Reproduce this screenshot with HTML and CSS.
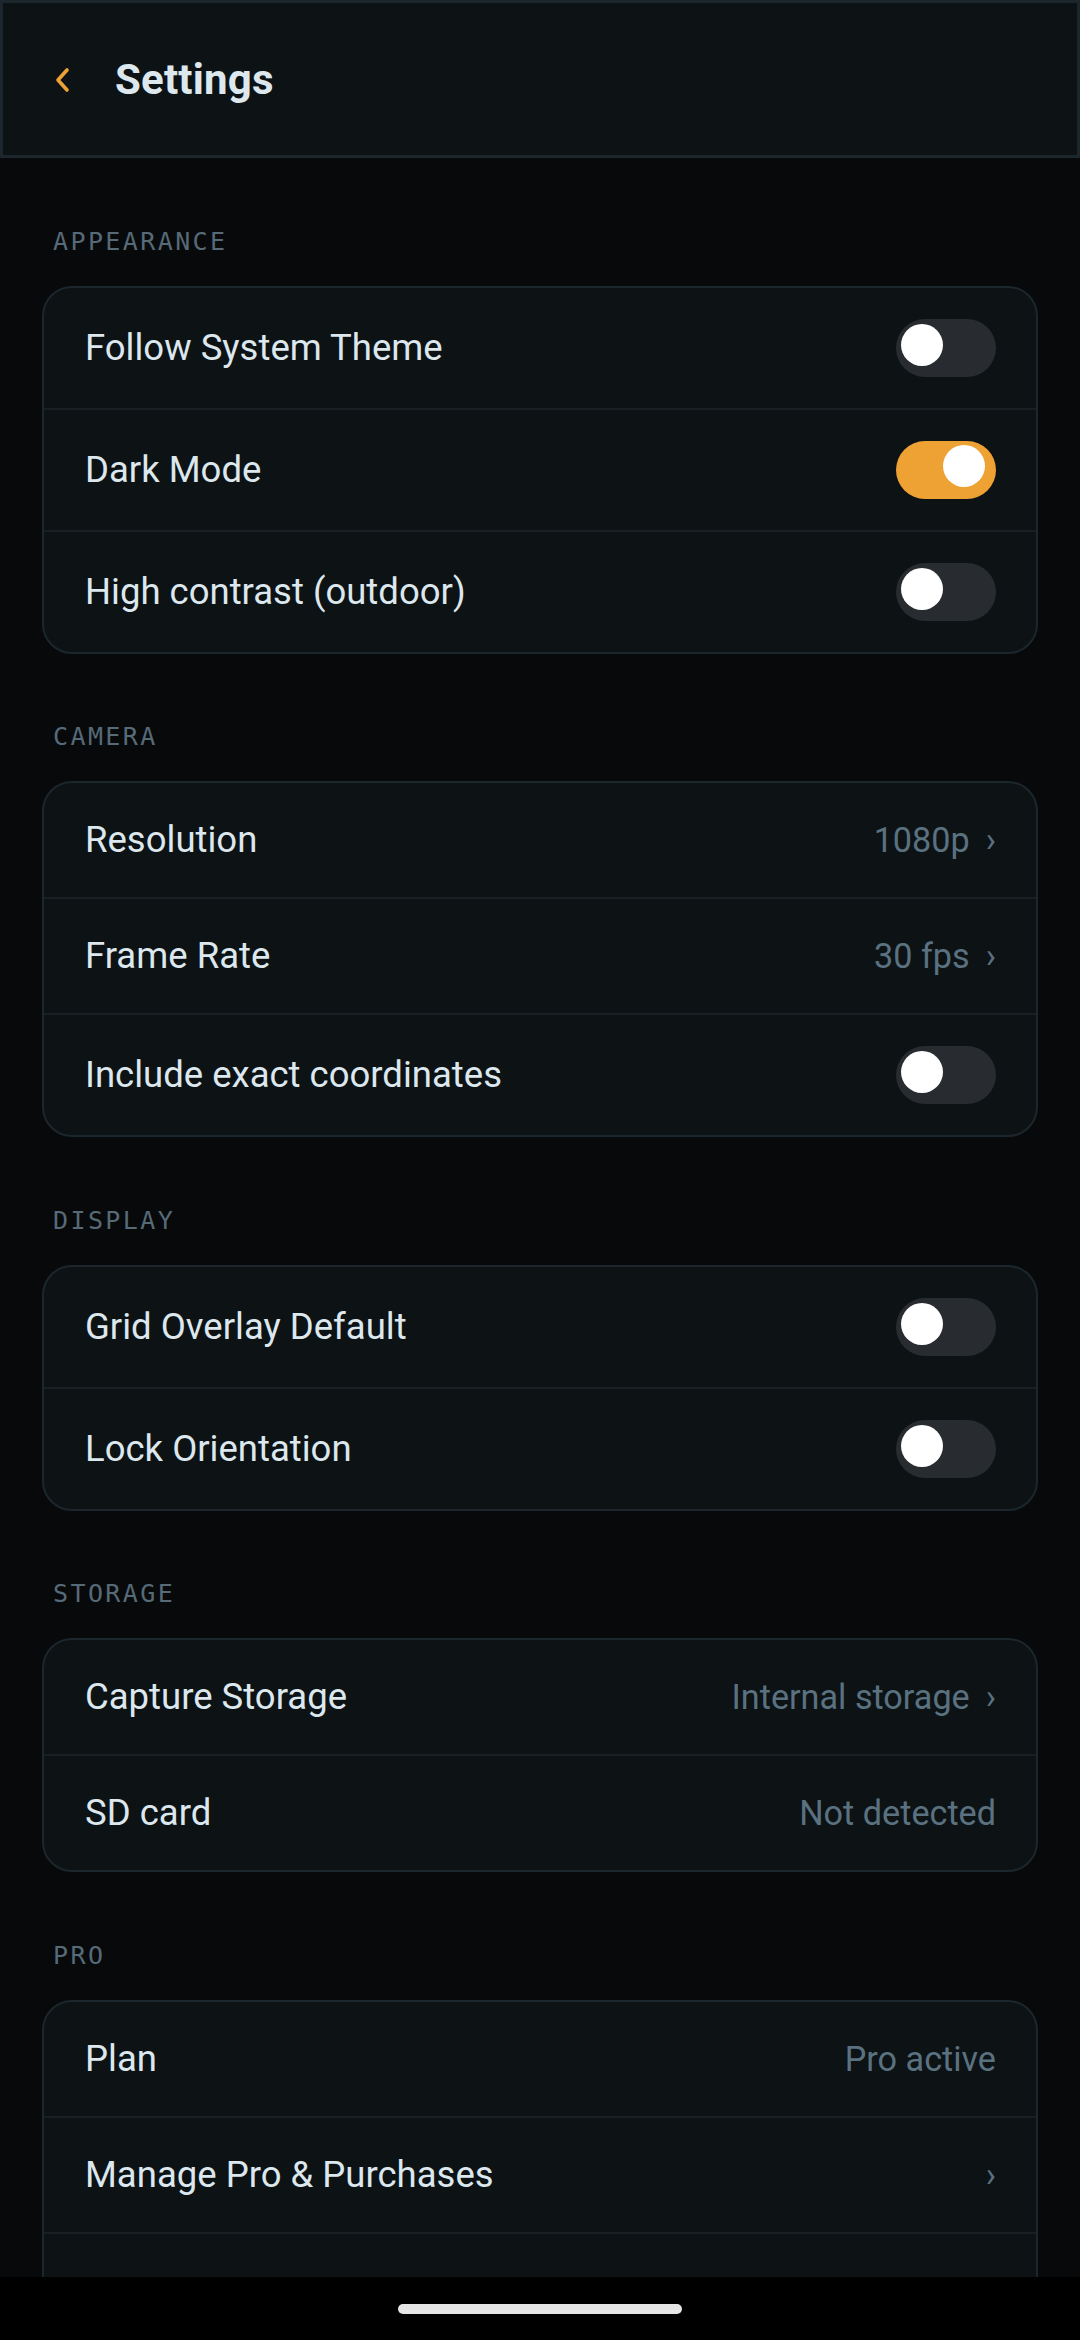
FILE: index.html
```html
<!DOCTYPE html>
<html lang="en">
<head>
    <meta charset="UTF-8">
    <meta name="viewport" content="width=device-width, initial-scale=1.0">
    <title>Settings</title>
    <link rel="stylesheet" href="styles.css">
</head>
<body>

    <div class="screen">
        <div class="content">
            <header class="topbar">
                <button class="back-btn" type="button" aria-label="Back">
                    <svg width="16" height="28" viewBox="0 0 16 28">
                        <polyline points="12,4 3,14 12,24" fill="none" stroke="#efa234" stroke-width="3.6" stroke-linecap="round" stroke-linejoin="round"/>
                    </svg>
                </button>
                <h1>Settings</h1>
            </header>

            <main class="groups">
                <!-- Aparência -->
                <section class="group">
                    <h2 class="group-label">APPEARANCE</h2>
                    <div class="card">
                        <div class="row">
                            <span class="row-title">Follow System Theme</span>
                            <span class="toggle"><span class="knob"></span></span>
                        </div>
                        <div class="row">
                            <span class="row-title">Dark Mode</span>
                            <span class="toggle on"><span class="knob"></span></span>
                        </div>
                        <div class="row">
                            <span class="row-title">High contrast (outdoor)</span>
                            <span class="toggle"><span class="knob"></span></span>
                        </div>
                    </div>
                </section>

                <!-- Câmera -->
                <section class="group">
                    <h2 class="group-label">CAMERA</h2>
                    <div class="card">
                        <div class="row">
                            <span class="row-title">Resolution</span>
                            <span class="row-value">1080p<span class="chev">›</span></span>
                        </div>
                        <div class="row">
                            <span class="row-title">Frame Rate</span>
                            <span class="row-value">30 fps<span class="chev">›</span></span>
                        </div>
                        <div class="row">
                            <span class="row-title">Include exact coordinates</span>
                            <span class="toggle"><span class="knob"></span></span>
                        </div>
                    </div>
                </section>

                <section class="group">
                    <h2 class="group-label">DISPLAY</h2>
                    <div class="card">
                        <div class="row">
                            <span class="row-title">Grid Overlay Default</span>
                            <span class="toggle"><span class="knob"></span></span>
                        </div>
                        <div class="row">
                            <span class="row-title">Lock Orientation</span>
                            <span class="toggle"><span class="knob"></span></span>
                        </div>
                    </div>
                </section>

                <section class="group">
                    <h2 class="group-label">STORAGE</h2>
                    <div class="card">
                        <div class="row">
                            <span class="row-title">Capture Storage</span>
                            <span class="row-value">Internal storage<span class="chev">›</span></span>
                        </div>
                        <div class="row">
                            <span class="row-title">SD card</span>
                            <span class="row-value">Not detected</span>
                        </div>
                    </div>
                </section>

                <section class="group">
                    <h2 class="group-label">PRO</h2>
                    <div class="card">
                        <div class="row">
                            <span class="row-title">Plan</span>
                            <span class="row-value">Pro active</span>
                        </div>
                        <div class="row">
                            <span class="row-title">Manage Pro &amp; Purchases</span>
                            <span class="row-value"><span class="chev">›</span></span>
                        </div>
                        <!-- próxima linha fica escondida atrás da barra de navegação -->
                        <div class="row row-empty"></div>
                    </div>
                </section>
            </main>
        </div>

        <!-- barra de navegação do sistema -->
        <div class="navbar"><span class="home-pill"></span></div>
    </div>

</body>
</html>
```

FILE: styles.css
```css
* {
    box-sizing: border-box;
}
body {
    margin: 0;
    background-color: #08090b;
    font-family: Roboto, "Noto Sans", Arial, sans-serif;
    color: #dce7ee;
}
.screen {
    width: 1080px;
    height: 2340px;
    display: flex;
    flex-direction: column;
}
.content {
    flex: 1;
    overflow: hidden;
}
.topbar {
    height: 158px;
    background-color: #0d1215;
    border: 3px solid #1c272d;
    display: flex;
    align-items: center;
    padding-left: 52px;
}
.back-btn {
    background: none;
    border: none;
    padding: 0;
    width: 20px;
    height: 28px;
    display: flex;
    align-items: center;
    margin-top: 2px;
}
.topbar h1 {
    margin: 0 0 0 40px;
    font-size: 42px;
    font-weight: 700;
    color: #dce7ee;
    letter-spacing: 0.2px;
}
.groups {
    padding: 0 42px;
}
.group {
    padding-top: 68.5px;
}
.group-label {
    margin: 0 0 29px 11px;
    font-family: "DejaVu Sans Mono", "Liberation Mono", monospace;
    font-weight: 400;
    font-size: 25px;
    line-height: 30px;
    letter-spacing: 2.4px;
    color: #566a77;
}
.card {
    background-color: #0d1215;
    border: 2px solid #1c272d;
    border-radius: 30px;
    overflow: hidden;
}
.row {
    display: flex;
    align-items: center;
    justify-content: space-between;
    padding: 31px 40px 31px 41px;
}
.row + .row {
    border-top: 2px solid #182024;
}
.row-empty {
    height: 114px;
}
.row-title {
    font-size: 36.5px;
    line-height: 52px;
    color: #dce7ee;
}
.row-value {
    font-size: 34.2px;
    line-height: 52px;
    color: #5a7180;
    display: flex;
    align-items: center;
}
.chev {
    margin-left: 16px;
}

/* interruptores */
.toggle {
    width: 100px;
    height: 58px;
    border-radius: 29px;
    background-color: #282c30;
    padding: 5px;
    display: flex;
    align-items: flex-start;
}
.toggle.on {
    background-color: #efa234;
    padding-left: 47px;
    padding-top: 4px;
}
.knob {
    width: 42px;
    height: 42px;
    border-radius: 50%;
    background-color: #ffffff;
}

.navbar {
    height: 63px;
    background-color: #000;
    display: flex;
    justify-content: center;
    padding-top: 27px;
}
.home-pill {
    width: 284px;
    height: 10px;
    border-radius: 5px;
    background-color: #e6e6e6;
}
```
